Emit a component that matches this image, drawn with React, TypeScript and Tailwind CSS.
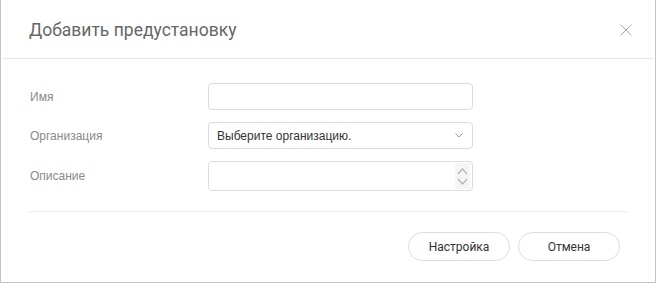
import React from "react";

export default function App() {
  const labelCls = "w-[179px] text-[12px] text-[#8a8a8a]";
  return (
    <div className="w-[656px] h-[283px] bg-white border-l border-r border-b border-[#c4c4c4] flex flex-col" style={{ fontFamily: '"Liberation Sans", Arial, sans-serif' }}>
      <div className="h-[59px] mx-[2px] border-b border-[#e6e6e6] flex items-center justify-between pl-[26px] pr-[21px] shrink-0">
        <span className="text-[17.5px] text-[#666666] pt-[2px]" style={{ fontFamily: "Roboto, sans-serif" }}>
          Добавить предустановку
        </span>
        <svg width="12" height="12" viewBox="0 0 12 12" className="mt-[1px]">
          <path d="M0.5 0.5 L11.5 11.5 M11.5 0.5 L0.5 11.5" stroke="#a8a8a8" strokeWidth="1" fill="none" />
        </svg>
      </div>
      <div className="pt-[24px] pl-[28px] flex flex-col gap-[12px]">
        <div className="flex items-center h-[27px]">
          <div className={labelCls + " pl-[1px]"}>Имя</div>
          <div className="w-[265px] h-[27px] border border-[#dcdcdc] rounded-[4px]" />
        </div>
        <div className="flex items-center h-[27px]">
          <div className={labelCls + " pl-[1px]"}>Организация</div>
          <div className="w-[265px] h-[27px] border border-[#dcdcdc] rounded-[4px] flex items-center justify-between pl-[8px] pr-[9px]">
            <span className="text-[12px] text-[#333333]">Выберите организацию.</span>
            <svg width="8" height="5" viewBox="0 0 8 5">
              <path d="M0.5 0.5 L4 4 L7.5 0.5" stroke="#9a9a9a" strokeWidth="1" fill="none" />
            </svg>
          </div>
        </div>
        <div className="flex items-center h-[30px]">
          <div className={labelCls + " pl-[1px]"}>Описание</div>
          <div className="w-[265px] h-[30px] border border-[#dcdcdc] rounded-[4px] flex justify-end pr-[2px] py-[1px]">
            <div className="w-[15px] bg-[#f5f5f5] flex flex-col items-center justify-center gap-[3px]">
              <svg width="11" height="7" viewBox="0 0 11 7">
                <path d="M1 6 L5.5 1 L10 6" stroke="#b4b4b4" strokeWidth="1.2" fill="none" />
              </svg>
              <svg width="11" height="7" viewBox="0 0 11 7">
                <path d="M1 1 L5.5 6 L10 1" stroke="#b4b4b4" strokeWidth="1.2" fill="none" />
              </svg>
            </div>
          </div>
        </div>
      </div>
      <div className="mx-[27px] mt-[20px] border-t border-[#eeeeee]" />
      <div className="flex justify-end gap-[8px] pr-[35px] mt-[20px]">
        <button className="w-[102px] h-[29px] rounded-full border border-[#dcdcdc] text-[12px] text-[#333333] bg-white" style={{ fontFamily: "Roboto, sans-serif" }}>
          Настройка
        </button>
        <button className="w-[102px] h-[29px] rounded-full border border-[#dcdcdc] text-[12px] text-[#333333] bg-white" style={{ fontFamily: "Roboto, sans-serif" }}>
          Отмена
        </button>
      </div>
    </div>
  );
}
